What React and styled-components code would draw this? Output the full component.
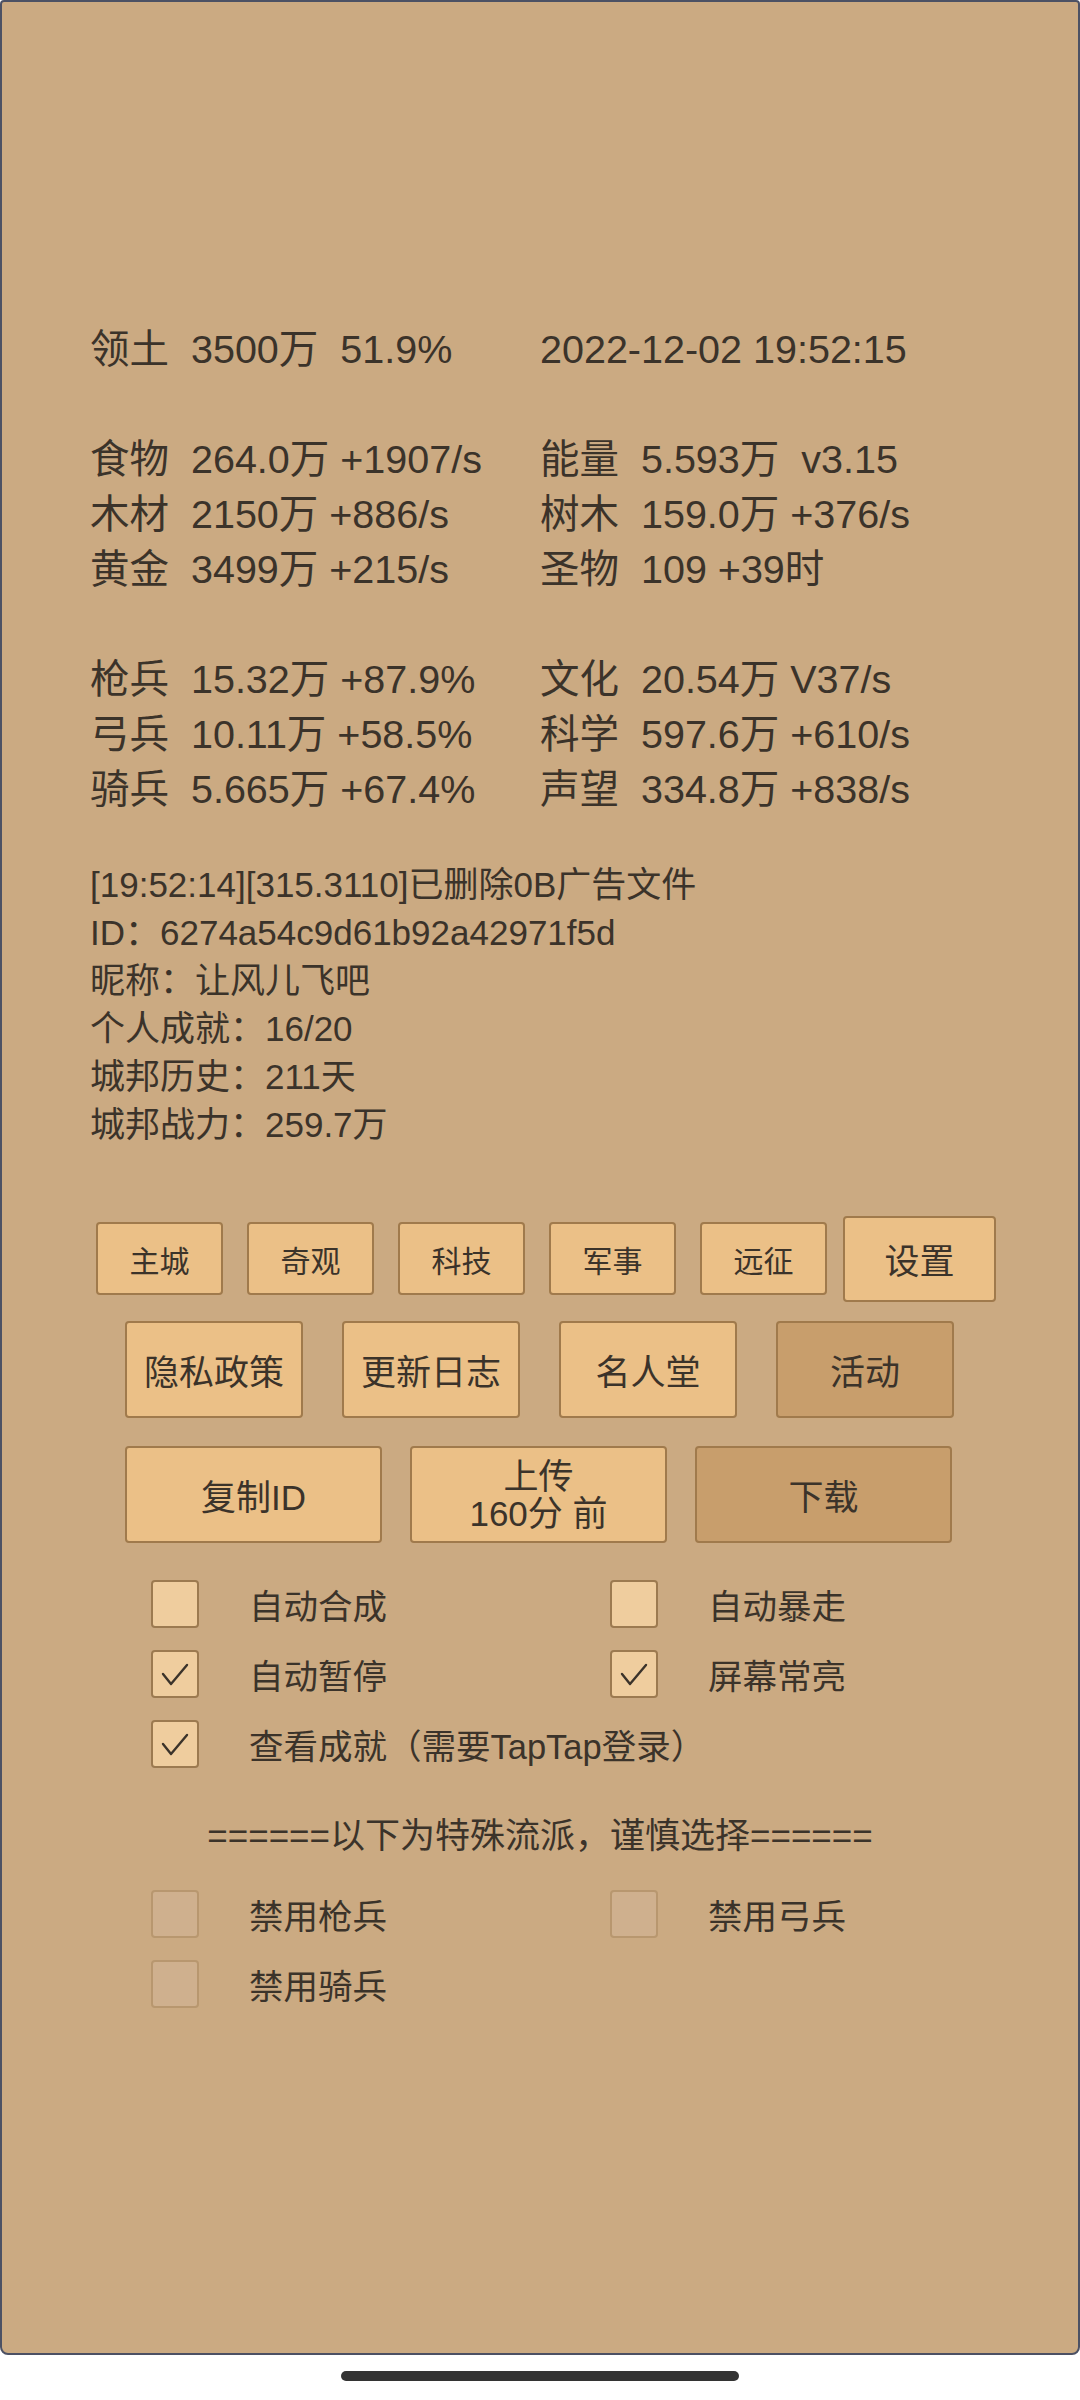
import React, { useState } from 'react'
import styled, { createGlobalStyle } from 'styled-components'

const GlobalStyle = createGlobalStyle`
  html, body {
    margin: 0;
    padding: 0;
    background: #ffffff;
  }
  body {
    font-family: 'Liberation Sans', 'Noto Sans CJK SC', sans-serif;
    color: #3b332a;
  }
`

const stats = [
  [['领土', '3500万  51.9%'], ['', '2022-12-02 19:52:15']],
  null,
  [['食物', '264.0万 +1907/s'], ['能量', '5.593万  v3.15']],
  [['木材', '2150万 +886/s'], ['树木', '159.0万 +376/s']],
  [['黄金', '3499万 +215/s'], ['圣物', '109 +39时']],
  null,
  [['枪兵', '15.32万 +87.9%'], ['文化', '20.54万 V37/s']],
  [['弓兵', '10.11万 +58.5%'], ['科学', '597.6万 +610/s']],
  [['骑兵', '5.665万 +67.4%'], ['声望', '334.8万 +838/s']],
]

const logLines = [
  '[19:52:14][315.3110]已删除0B广告文件',
  'ID：6274a54c9d61b92a42971f5d',
  '昵称：让风儿飞吧',
  '个人成就：16/20',
  '城邦历史：211天',
  '城邦战力：259.7万',
]

const App = () => {
  const [opts, setOpts] = useState({
    merge: false,
    rampage: false,
    pause: true,
    screen: true,
    achieve: true,
  })

  const toggle = (key) => setOpts({ ...opts, [key]: !opts[key] })

  const fmt = ([label, value]) => (label ? `${label}  ${value}` : value)

  return (
    <Page>
      <GlobalStyle />
      <Panel>
        <Stats>
          {stats.map((row, i) =>
            row ? (
              <StatRow key={i}>
                <StatCell>{fmt(row[0])}</StatCell>
                <StatCell>{fmt(row[1])}</StatCell>
              </StatRow>
            ) : (
              <StatRow key={i} />
            )
          )}
        </Stats>

        <Log>
          {logLines.map((line) => (
            <LogLine key={line}>{line}</LogLine>
          ))}
        </Log>

        <TabRow>
          {['主城', '奇观', '科技', '军事', '远征'].map((t) => (
            <TabButton key={t}>{t}</TabButton>
          ))}
          <SettingsButton>设置</SettingsButton>
        </TabRow>

        <ButtonRow gap={39}>
          <BigButton w={178}>隐私政策</BigButton>
          <BigButton w={178}>更新日志</BigButton>
          <BigButton w={178}>名人堂</BigButton>
          <BigButton w={178} dark>
            活动
          </BigButton>
        </ButtonRow>

        <ButtonRow gap={28} top={28}>
          <BigButton w={257}>复制ID</BigButton>
          <BigButton w={257}>
            <TwoLine>
              上传
              <br />
              160分 前
            </TwoLine>
          </BigButton>
          <BigButton w={257} dark>
            下载
          </BigButton>
        </ButtonRow>

        <Options>
          <Option>
            <Box onClick={() => toggle('merge')}>{opts.merge && <Check />}</Box>
            <OptionLabel>自动合成</OptionLabel>
          </Option>
          <Option>
            <Box onClick={() => toggle('rampage')}>{opts.rampage && <Check />}</Box>
            <OptionLabel>自动暴走</OptionLabel>
          </Option>
          <Option>
            <Box onClick={() => toggle('pause')}>{opts.pause && <Check />}</Box>
            <OptionLabel>自动暂停</OptionLabel>
          </Option>
          <Option>
            <Box onClick={() => toggle('screen')}>{opts.screen && <Check />}</Box>
            <OptionLabel>屏幕常亮</OptionLabel>
          </Option>
          <Option wide>
            <Box onClick={() => toggle('achieve')}>{opts.achieve && <Check />}</Box>
            <OptionLabel>查看成就（需要TapTap登录）</OptionLabel>
          </Option>
        </Options>

        <Divider>======以下为特殊流派，谨慎选择======</Divider>

        <Options top={30}>
          <Option>
            <Box muted />
            <OptionLabel>禁用枪兵</OptionLabel>
          </Option>
          <Option>
            <Box muted />
            <OptionLabel>禁用弓兵</OptionLabel>
          </Option>
          <Option>
            <Box muted />
            <OptionLabel>禁用骑兵</OptionLabel>
          </Option>
        </Options>
      </Panel>
      <HomeArea>
        <HomeBar />
      </HomeArea>
    </Page>
  )
}

const Check = () => (
  <svg width="44" height="44" viewBox="0 0 44 44">
    <path
      d="M10 22 L18 32 L34 13"
      fill="none"
      stroke="#3b332a"
      strokeWidth="2.4"
      strokeLinecap="round"
      strokeLinejoin="round"
    />
  </svg>
)

export default App

const Page = styled.div`
  width: 1080px;
  display: flex;
  flex-direction: column;
`

const Panel = styled.div`
  box-sizing: border-box;
  width: 1080px;
  height: 2355px;
  background: #cbaa82;
  border: 2px solid #4c5164;
  border-radius: 4px 4px 8px 8px;
  padding-top: 320px;
`

const Stats = styled.div`
  display: flex;
  flex-direction: column;
  padding-left: 88px;
`

const StatRow = styled.div`
  display: grid;
  grid-template-columns: 450px 1fr;
  height: 55px;
  align-items: center;
  font-size: 39.5px;
  white-space: pre;
`

const StatCell = styled.div`
  line-height: 55px;
`

const Log = styled.div`
  display: flex;
  flex-direction: column;
  padding-left: 88px;
  margin-top: 44px;
`

const LogLine = styled.div`
  font-size: 35px;
  line-height: 48px;
  height: 48px;
  white-space: pre;
`

const TabRow = styled.div`
  display: flex;
  align-items: center;
  padding-left: 94px;
  margin-top: 66px;
  height: 87px;
`

const TabButton = styled.div`
  box-sizing: border-box;
  width: 127px;
  height: 73px;
  margin-right: 24px;
  display: flex;
  align-items: center;
  justify-content: center;
  background: #ebc087;
  border: 2px solid #a07a4c;
  border-radius: 4px;
  font-size: 30px;
  color: #3b332a;
  &:nth-child(5) {
    margin-right: 16px;
  }
`

const SettingsButton = styled(TabButton)`
  width: 153px;
  height: 86px;
  margin-right: 0;
  font-size: 35px;
`

const ButtonRow = styled.div`
  display: flex;
  gap: ${(p) => p.gap}px;
  padding-left: 123px;
  margin-top: ${(p) => p.top || 19}px;
`

const BigButton = styled.div`
  box-sizing: border-box;
  width: ${(p) => p.w}px;
  height: 97px;
  display: flex;
  align-items: center;
  justify-content: center;
  background: ${(p) => (p.dark ? '#c89e6c' : '#ebc087')};
  border: 2px solid #a07a4c;
  border-radius: 4px;
  font-size: 35px;
  color: #3b332a;
`

const TwoLine = styled.div`
  text-align: center;
  line-height: 37px;
`

const Options = styled.div`
  display: grid;
  grid-template-columns: 459px 1fr;
  row-gap: 22px;
  padding-left: 149px;
  margin-top: ${(p) => p.top || 37}px;
`

const Option = styled.div`
  display: flex;
  align-items: center;
  height: 48px;
  grid-column: ${(p) => (p.wide ? '1 / span 2' : 'auto')};
`

const Box = styled.div`
  box-sizing: border-box;
  width: 48px;
  height: 48px;
  flex-shrink: 0;
  display: flex;
  align-items: center;
  justify-content: center;
  background: ${(p) => (p.muted ? '#cfb08e' : '#efcd9e')};
  border: 2px solid ${(p) => (p.muted ? '#b8976f' : '#9c7a50')};
  border-radius: 4px;
  svg {
    display: block;
  }
`

const OptionLabel = styled.div`
  margin-left: 50px;
  font-size: 34.5px;
  white-space: pre;
`

const Divider = styled.div`
  margin-top: 44px;
  text-align: center;
  font-size: 35px;
  line-height: 48px;
  white-space: pre;
`

const HomeArea = styled.div`
  height: 45px;
  display: flex;
  justify-content: center;
  padding-top: 16px;
  box-sizing: border-box;
`

const HomeBar = styled.div`
  width: 398px;
  height: 10px;
  border-radius: 5px;
  background: #333333;
`
